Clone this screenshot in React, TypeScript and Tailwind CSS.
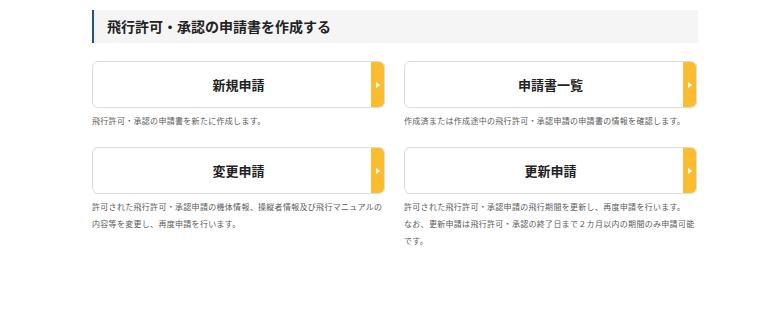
const items = [
  { title: "新規申請", desc: "飛行許可・承認の申請書を新たに作成します。" },
  { title: "申請書一覧", desc: "作成済または作成途中の飛行許可・承認申請の申請書の情報を確認します。" },
  {
    title: "変更申請",
    desc: "許可された飛行許可・承認申請の機体情報、操縦者情報及び飛行マニュアルの内容等を変更し、再度申請を行います。",
  },
  {
    title: "更新申請",
    desc: "許可された飛行許可・承認申請の飛行期間を更新し、再度申請を行います。\nなお、更新申請は飛行許可・承認の終了日まで２カ月以内の期間のみ申請可能です。",
  },
];

function MenuCard({ title, desc }: { title: string; desc: string }) {
  return (
    <div className="flex flex-col">
      {/* Button */}
      <button className="relative flex h-[47px] w-full items-center justify-center rounded-[6px] border border-[#dcdcdc] bg-white overflow-hidden">
        <span className="text-[13px] font-bold text-[#222]">{title}</span>
        <span className="absolute right-0 top-0 bottom-0 flex w-[13px] items-center justify-center bg-[#fbbd2f]">
          <span className="block h-0 w-0 border-y-[3px] border-l-[4px] border-y-transparent border-l-white" />
        </span>
      </button>
      {/* Description */}
      <p className="mt-[4px] whitespace-pre-line text-[8px] leading-[17px] tracking-[0.3px] text-[#5a5a5a]">
        {desc}
      </p>
    </div>
  );
}

export default function App() {
  return (
    <div
      className="h-[310px] w-[780px] bg-white pt-[10px] pl-[92px]"
      style={{ fontFamily: '"Noto Sans CJK JP", "Noto Sans", sans-serif' }}
    >
      <div className="w-[606px]">
        <div className="flex h-[33px] items-center border-l-[2px] border-[#23508f] bg-[#f5f5f5] pl-[13px]">
          <h2 className="text-[14px] font-bold text-[#222]">飛行許可・承認の申請書を作成する</h2>
        </div>

        <div className="mt-[18px] grid grid-cols-2 gap-x-[19px] gap-y-[18px] w-[605px]">
          {items.map((it) => (
            <MenuCard key={it.title} title={it.title} desc={it.desc} />
          ))}
        </div>
      </div>
    </div>
  );
}
